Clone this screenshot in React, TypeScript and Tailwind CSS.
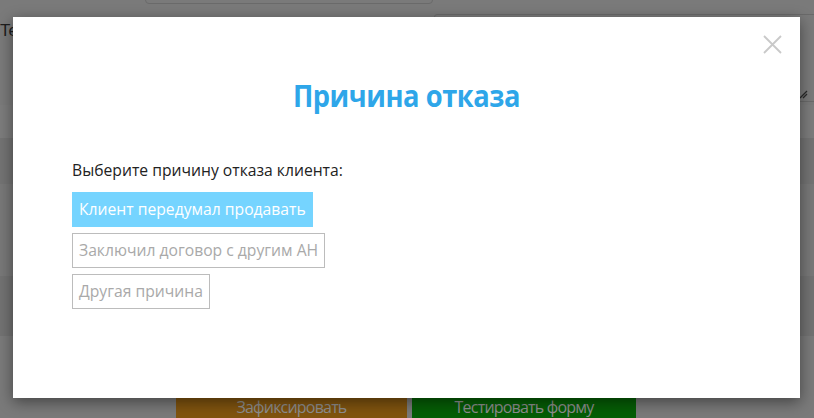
import React from "react";

export default function App() {
  const font = { fontFamily: '"Open Sans", "Noto Sans", sans-serif' } as React.CSSProperties;
  return (
    <div className="relative w-[814px] h-[418px] overflow-hidden bg-[#7a7a7a]" style={font}>
      {/* background page (already dimmed) */}
      <div className="absolute inset-0 flex flex-col">
        <div className="h-[105px] bg-[#7a7a7a] relative">
          <div className="absolute left-[145px] top-[-10px] w-[288px] h-[14px] border border-[#6a6a6a] rounded-[4px]" />
          <div className="absolute left-[0px] top-[18px] text-[17px] text-[#1e1e1e]" style={{ fontFamily: '"Liberation Sans", sans-serif' }}>Te</div>
          <div className="absolute right-[-20px] top-[14px] w-[400px] h-[88px] border border-[#6a6a6a] rounded-[3px]" />
          <svg className="absolute left-[799px] top-[90px]" width="10" height="10" viewBox="0 0 10 10">
            <path d="M1 8 L8 1 M4 8 L8 4" stroke="#2a2a2a" strokeWidth="1.3" />
          </svg>
        </div>
        <div className="h-[33px] bg-[#7c7c7c]" />
        <div className="h-[46px] bg-[#737373]" />
        <div className="h-[92px] bg-[#787878]" />
        <div className="h-[60px] bg-[#727272]" />
        <div className="flex-1 bg-[#7a7a7a] relative">
          <div className="absolute left-[176px] top-[55px] w-[231px] h-[40px] bg-[#80540f] text-[#8f8f8f] text-[16px] flex justify-center pt-[4px] tracking-[-0.8px]">Зафиксировать</div>
          <div className="absolute left-[412px] top-[55px] w-[224px] h-[40px] bg-[#055e05] text-[#8f8f8f] text-[16px] flex justify-center pt-[4px] tracking-[-0.8px]">Тестировать форму</div>
        </div>
      </div>

      {/* modal */}
      <div className="absolute left-[13px] top-[17px] w-[787px] h-[381px] bg-white shadow-[0_4px_14px_rgba(0,0,0,0.45)]">
        <svg className="absolute left-[750px] top-[18px]" width="19" height="19" viewBox="0 0 19 19">
          <path d="M1 1 L18 18 M18 1 L1 18" stroke="#c9c9c9" strokeWidth="1.8" />
        </svg>
        <div className="flex flex-col">
          <h2 className="mt-[56px] text-center text-[31px] leading-[44px] font-bold text-[#2ea6e9] tracking-[-0.5px]" style={{ transform: 'scaleX(0.88)' }}>Причина отказа</h2>
          <div className="pl-[59px] mt-[42px] flex flex-col items-start">
            <div className="text-[15.7px] leading-[22px] text-[#222]">Выберите причину отказа клиента:</div>
            <div className="mt-[11px] flex flex-col items-start gap-[6px]">
              <div className="h-[35px] px-[6px] bg-[#75d4ff] text-white text-[15.7px] leading-[33px] border border-[#75d4ff]">Клиент передумал продавать</div>
              <div className="h-[35px] px-[6px] border border-[#bcbcbc] text-[#a9a9a9] text-[15.7px] leading-[33px]">Заключил договор с другим АН</div>
              <div className="h-[35px] px-[6px] border border-[#bcbcbc] text-[#a9a9a9] text-[15.7px] leading-[33px]">Другая причина</div>
            </div>
          </div>
        </div>
      </div>
    </div>
  );
}
